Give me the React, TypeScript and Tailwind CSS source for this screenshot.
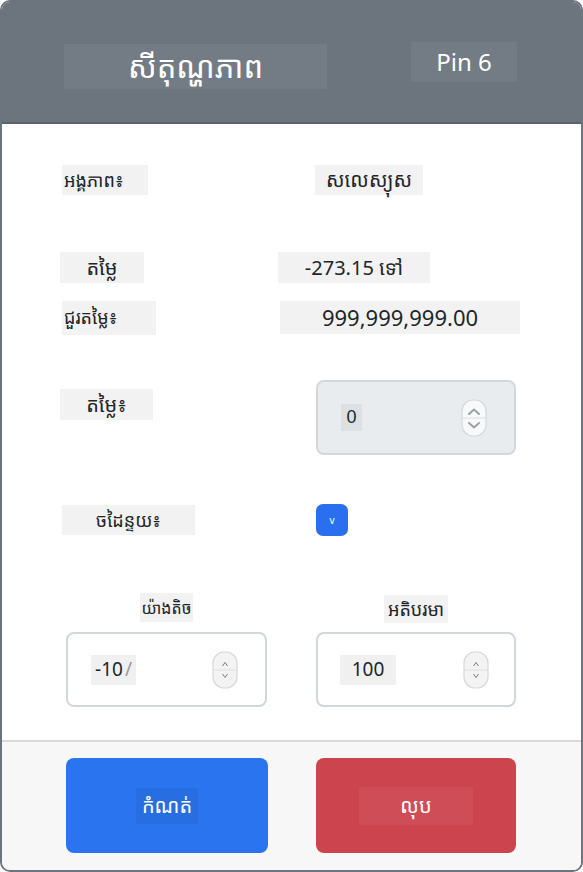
import React from 'react';

const font = { fontFamily: '"Noto Sans", "Noto Sans Khmer", "Open Sans", sans-serif' };

function Spinner({ small = false, disabled = false }: { small?: boolean; disabled?: boolean }) {
  const stroke = disabled ? '#8a8f94' : '#6b7075';
  return (
    <svg width="26" height="38" viewBox="0 0 26 38" className="shrink-0">
      <rect x="1" y="1" width="24" height="36" rx="11" fill={disabled ? '#f8f9fa' : '#f3f3f3'} stroke="#d6d8da" strokeWidth="1.2" />
      <line x1="1" y1="19" x2="25" y2="19" stroke="#dcdedf" strokeWidth="1" />
      {small ? (
        <>
          <path d="M10.5 15 L13 11.5 L15.5 15" fill="none" stroke={stroke} strokeWidth="0.9" />
          <path d="M10.5 23 L13 26.5 L15.5 23" fill="none" stroke={stroke} strokeWidth="0.9" />
        </>
      ) : (
        <>
          <path d="M8 15 L13 10.5 L18 15" fill="none" stroke="#9aa0a6" strokeWidth="2" strokeLinecap="round" />
          <path d="M8 24 L13 28.5 L18 24" fill="none" stroke="#9aa0a6" strokeWidth="2" strokeLinecap="round" />
        </>
      )}
    </svg>
  );
}

export default function App() {
  return (
    <div className="w-[583px] h-[872px] bg-white text-[#212529]" style={font}>
      <div className="w-full h-full flex flex-col border-2 border-[#6c757d] rounded-[10px] overflow-hidden">
        {/* Header */}
        <div className="h-[122px] shrink-0 bg-[#6c757d] border-b-2 border-[#5c636a] flex items-start">
          <div className="ml-[62px] mt-[42px] w-[263px] h-[45px] bg-white/5 flex items-center justify-center text-white text-[31px] leading-none">
            សីតុណ្ហភាព
          </div>
          <div className="ml-[84px] mt-[40px] w-[106px] h-[40px] bg-white/5 flex items-center justify-center text-white text-[24px] leading-none">
            Pin 6
          </div>
        </div>

        {/* Body */}
        <div className="flex-1 flex flex-col pl-[60px]">
          <div className="flex items-center mt-[41px] h-[30px]">
            <div className="w-[86px] h-[30px] bg-[#f2f2f2] flex items-center pl-[2px] text-[18px]">អង្គភាព៖</div>
            <div className="ml-[167px] w-[108px] h-[30px] bg-[#f2f2f2] flex items-center justify-center text-[20px]">សលេស្យុស</div>
          </div>

          <div className="flex items-center mt-[57px] h-[31px]">
            <div className="-ml-[2px] w-[84px] h-[31px] bg-[#f2f2f2] flex items-center justify-center text-[20px]">តម្លៃ</div>
            <div className="ml-[134px] w-[152px] h-[31px] bg-[#f2f2f2] flex items-center justify-center text-[20px]">-273.15 ទៅ</div>
          </div>

          <div className="flex items-center mt-[17px] h-[35px]">
            <div className="w-[94px] h-[34px] bg-[#f2f2f2] flex items-center pl-[2px] text-[18px]">ជួរតម្លៃ៖</div>
            <div className="ml-[124px] w-[240px] h-[33px] bg-[#f2f2f2] flex items-center justify-center text-[22px]">999,999,999.00</div>
          </div>

          <div className="flex items-start mt-[45px]">
            <div className="-ml-[2px] mt-[9px] w-[93px] h-[31px] bg-[#f2f2f2] flex items-center justify-center text-[20px]">តម្លៃ៖</div>
            <div className="ml-[163px] w-[200px] h-[75px] bg-[#e9ecef] border-2 border-[#d3d7db] rounded-[8px] flex items-center pl-[23px] pr-[27px]">
              <span className="w-[21px] h-[27px] bg-[#dde0e3] flex items-center justify-center text-[18px]" style={{ fontFamily: '"Liberation Sans", Arial, sans-serif' }}>0</span>
              <div className="ml-auto">
                <Spinner disabled />
              </div>
            </div>
          </div>

          <div className="flex items-center mt-[49px] h-[32px]">
            <div className="w-[133px] h-[30px] bg-[#f2f2f2] flex items-center justify-center text-[18px]">ចដៃន្ទយ៖</div>
            <div className="ml-[121px] w-[32px] h-[32px] rounded-[7px] bg-[#2a6ff0] flex items-center justify-center">
              <span className="text-white text-[10px] leading-none">v</span>
            </div>
          </div>

          <div className="flex mt-[57px] gap-[49px] ml-[4px]">
            <div className="w-[201px] flex flex-col items-center">
              <div className="w-[53px] h-[29px] bg-[#f2f2f2] flex items-center justify-center text-[16px]">យ៉ាងតិច</div>
              <div className="mt-[10px] w-[201px] h-[75px] bg-white border-2 border-[#d3d7db] rounded-[8px] flex items-center pl-[23px] pr-[27px]">
                <span className="w-[45px] h-[30px] bg-[#f0f0f0] flex items-center justify-center text-[19px]">-10 <span className="text-[#999] ml-[2px]">/</span></span>
                <div className="ml-auto">
                  <Spinner small />
                </div>
              </div>
            </div>
            <div className="w-[200px] flex flex-col items-center">
              <div className="mt-[2px] w-[64px] h-[28px] bg-[#f2f2f2] flex items-center justify-center text-[18px]">អតិបរមា</div>
              <div className="mt-[9px] w-[200px] h-[75px] bg-white border-2 border-[#d3d7db] rounded-[8px] flex items-center pl-[22px] pr-[25px]">
                <span className="w-[56px] h-[30px] bg-[#f0f0f0] flex items-center justify-center text-[19px]">100</span>
                <div className="ml-auto">
                  <Spinner small />
                </div>
              </div>
            </div>
          </div>
        </div>

        {/* Footer */}
        <div className="h-[130px] shrink-0 bg-[#f7f7f7] border-t-2 border-[#d9d9d9] flex items-start pt-[16px] pl-[64px] gap-[48px]">
          <div className="w-[202px] h-[95px] rounded-[8px] bg-[#2a74f0] flex items-center justify-center">
            <span className="w-[62px] h-[36px] bg-black/5 flex items-center justify-center text-white text-[20px]">កំណត់</span>
          </div>
          <div className="w-[200px] h-[95px] rounded-[8px] bg-[#cb444e] flex items-center justify-center">
            <span className="w-[114px] h-[38px] bg-white/5 flex items-center justify-center text-white text-[20px]">លុប</span>
          </div>
        </div>
      </div>
    </div>
  );
}
